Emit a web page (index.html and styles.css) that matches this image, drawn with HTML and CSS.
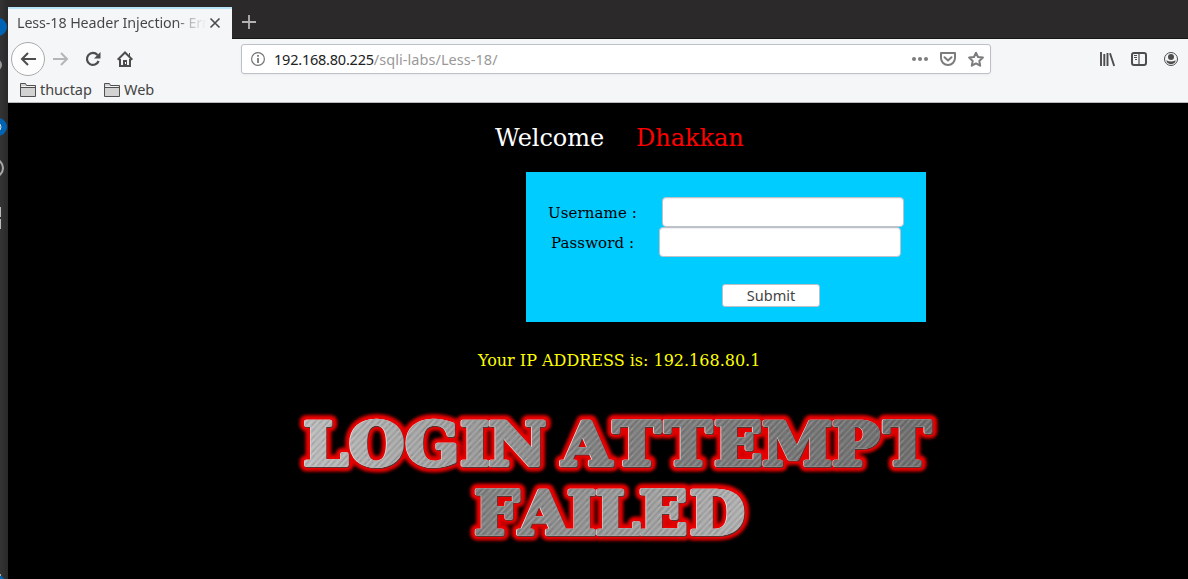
FILE: index.html
```html
<!DOCTYPE html>
<html lang="en">
<head>
<meta charset="utf-8">
<title>Less-18 Header Injection- Error Based</title>
<link rel="stylesheet" href="styles.css">
</head>
<body>
<div class="desktop">
  <aside class="dock">
    <svg width="8" height="579" viewBox="0 0 8 579">
      <circle cx="-2" cy="27" r="9" fill="#0064b4"/>
      <circle cx="-4" cy="65" r="5" fill="none" stroke="#999" stroke-width="2"/>
      <circle cx="-2" cy="127" r="9" fill="#0064b4"/>
      <path d="M0 124q2 3 0 6" fill="none" stroke="#ddd"/>
      <circle cx="-6" cy="168" r="9" fill="none" stroke="#aaa" stroke-width="2"/>
      <path d="M0 207h1v10H0zM0 219h1v10H0z" fill="#bbb"/>
      <circle cx="-3" cy="583" r="8" fill="#0064b4"/>
      <path d="M0 574h1v2H0z" fill="#aaa"/>
    </svg>
  </aside>
  <main class="browser">
    <header class="tabs">
      <div class="tab">
        <span class="tab-title">Less-18 Header Injection- Err</span>
        <svg class="tab-close" width="12" height="12" viewBox="0 0 12 12"><path d="M1.500 1.500l9 9M10.500 1.500l-9 9" stroke="#4a4a4a" stroke-width="1.600"/></svg>
      </div>
      <svg class="new-tab" width="14" height="14" viewBox="0 0 14 14"><path d="M7 0v14M0 7h14" stroke="#b4b3b3" stroke-width="1.800"/></svg>
    </header>
    <nav class="toolbar">
      <div class="nav-buttons">
        <span class="back"><svg width="16" height="16" viewBox="0 0 16 16"><path d="M16 8H2M8 2L2 8l6 6" fill="none" stroke="#4d4d4d" stroke-width="2"/></svg></span>
        <svg width="16" height="16" viewBox="0 0 16 16"><path d="M0 8h14M8 2l6 6-6 6" fill="none" stroke="#b5b6b7" stroke-width="2"/></svg>
        <svg width="16" height="16" viewBox="0 0 16 16"><path d="M13.600 10A6 6 0 1 1 12.500 4" fill="none" stroke="#4d4d4d" stroke-width="2.200"/><path d="M15.500 1v6.500H9z" fill="#4d4d4d"/></svg>
        <svg width="16" height="16" viewBox="0 0 16 16"><path d="M.7 8.700L8 1.500l7.300 7.200M3 8v7h10V8" fill="none" stroke="#4d4d4d" stroke-width="2"/><path d="M6 15V9h4v6z" fill="#4d4d4d"/><path d="M12 2h1v3h-1z" fill="#4d4d4d"/><path d="M8 11h1v2H8z" fill="#f5f6f7"/></svg>
      </div>
      <div class="urlbar">
        <svg width="14" height="14" viewBox="0 0 14 14"><circle cx="7" cy="7" r="6.400" fill="none" stroke="#777" stroke-width="1.200"/><path d="M6.100 6h1.800v5H6.100zM6.100 3h1.800v1.800H6.100z" fill="#777"/></svg>
        <div class="address"><span class="host">192.168.80.225</span><span class="path">/sqli-labs/Less-18/</span></div>
        <div class="page-actions">
          <svg width="16" height="16" viewBox="0 0 16 16"><g fill="#7c7c7c"><circle cx="2" cy="8" r="2"/><circle cx="8" cy="8" r="2"/><circle cx="14" cy="8" r="2"/></g></svg>
          <svg width="16" height="16" viewBox="0 0 16 16"><path d="M1 2h14v5a7 7 0 0 1-14 0z" fill="none" stroke="#7c7c7c" stroke-width="2" stroke-linejoin="round"/><path d="M4.500 6.200L8 9.500l3.500-3.300" fill="none" stroke="#7c7c7c" stroke-width="2" stroke-linecap="round"/></svg>
          <svg width="16" height="16" viewBox="0 0 16 16"><path d="M8 1.700l2 4.300 4.900.6-3.600 3.300.9 4.800L8 12.400l-4.200 2.300.9-4.800L1.100 6.600 6 6z" fill="none" stroke="#7c7c7c" stroke-width="2" stroke-linejoin="round"/></svg>
        </div>
      </div>
      <div class="tools">
        <svg width="16" height="16" viewBox="0 0 16 16"><path d="M2 1v14M5.300 3v12M8.500 2v13M11 2.300L15.200 15" fill="none" stroke="#4d4d4d" stroke-width="1.900"/></svg>
        <svg width="16" height="16" viewBox="0 0 16 16"><rect x="1" y="2" width="14" height="12" rx="2" fill="none" stroke="#4d4d4d" stroke-width="2"/><path d="M8 2v12" stroke="#4d4d4d" stroke-width="1.200"/><path d="M3 4.500h3M3 6.500h3M4 8.500h2" stroke="#4d4d4d"/></svg>
        <svg width="16" height="16" viewBox="0 0 16 16"><circle cx="8" cy="8" r="6.500" fill="none" stroke="#4d4d4d"/><circle cx="8" cy="6" r="3" fill="#4d4d4d"/><path d="M3.300 9.300Q8 11.800 12.700 9.300L12 11.500Q8 15 4 11.500z" fill="#4d4d4d"/></svg>
      </div>
    </nav>
    <div class="bookmarks">
      <svg width="16" height="14" viewBox="0 0 16 14"><path d="M.5 13.500V.5h5l1 2h9v11z" fill="#d2d2d2" stroke="#505050"/><path d="M1 4.500h14" stroke="#505050"/><path d="M1.500 3.500h13" stroke="#f3f3f3"/></svg>
      <span class="bm-first">thuctap</span>
      <svg width="16" height="14" viewBox="0 0 16 14"><path d="M.5 13.500V.5h5l1 2h9v11z" fill="#d2d2d2" stroke="#505050"/><path d="M1 4.500h14" stroke="#505050"/><path d="M1.500 3.500h13" stroke="#f3f3f3"/></svg>
      <span class="bm-second">Web</span>
    </div>
    <section class="page">
      <div class="welcome"><span>Welcome</span><span class="name">Dhakkan</span></div>
      <form class="login">
        <label class="field user"><span>Username :</span><input type="text"></label>
        <label class="field pass"><span>Password :</span><input type="password"></label>
        <button class="submit" type="button">Submit</button>
      </form>
      <p class="ip">Your IP ADDRESS is: 192.168.80.1</p>
      <svg class="banner" width="660" height="150" viewBox="290 405 660 150">
        <defs>
          <pattern id="brush" width="9" height="9" patternUnits="userSpaceOnUse" patternTransform="rotate(-48)">
            <path d="M0 .5h9M0 5.200h9" stroke="#fff" stroke-opacity=".13" stroke-width=".8"/>
            <path d="M0 2.600h9M0 7.500h9" stroke="#000" stroke-opacity=".12" stroke-width=".8"/>
          </pattern>
          <linearGradient id="metal" gradientUnits="userSpaceOnUse" x1="286" y1="419" x2="885" y2="419">
            <stop offset="0" stop-color="#bdbdbd"/><stop offset=".25" stop-color="#9f9f9f"/><stop offset=".38" stop-color="#8c8c8c"/><stop offset=".46" stop-color="#828282"/><stop offset="1" stop-color="#707070"/>
          </linearGradient>
          <linearGradient id="metal-low" gradientUnits="userSpaceOnUse" x1="448" y1="488" x2="703" y2="510">
            <stop offset="0" stop-color="#808080"/><stop offset="1" stop-color="#b2b2b2"/>
          </linearGradient>
          <filter id="glow" x="-10%" y="-30%" width="120%" height="160%"><feGaussianBlur stdDeviation="1.600"/></filter>
          <g id="line-one" transform="scale(1.06 1)"><text y="464.500" x="286.400 329.400 382.400 434.100 460.800">LOGIN</text><text y="464.500" x="530.500 578.500 627.100 673.800 719.200 785 833.800">ATTEMPT</text></g>
          <g id="line-two" transform="scale(1.06 1)"><text y="533.500" x="447.500 489.900 535 561.900 603 650.900">FAILED</text></g>
        </defs>
        <g class="halo" filter="url(#glow)"><use href="#line-one"/><use href="#line-two"/></g>
        <g class="rim"><use href="#line-one"/><use href="#line-two"/></g>
        <g class="shade"><use href="#line-one" x=".5" y=".5"/><use href="#line-two" x=".5" y=".5"/></g>
        <g class="shine"><use href="#line-one" x="-.7" y="-.7"/><use href="#line-two" x="-.7" y="-.7"/></g>
        <g class="face"><use class="upper" href="#line-one"/><use class="lower" href="#line-two"/></g>
        <g class="grain"><use href="#line-one"/><use href="#line-two"/></g>
      </svg>
    </section>
  </main>
</div>
</body>
</html>
```
FILE: styles.css
```css
* { box-sizing: border-box; }
body { margin: 0; background: #000; overflow: hidden; font-family: "Noto Sans", sans-serif; }
svg { display: block; flex: none; }
.desktop { display: flex; width: 1188px; height: 579px; }
.dock { width: 8px; background: linear-gradient(90deg, #343434, #292929); overflow: hidden; }
.browser { flex: 1; display: flex; flex-direction: column; }
.tabs { display: flex; align-items: center; height: 39px; padding-top: 7px; background: #2b292a; border-bottom: 1px solid #161616; }
.tab { display: flex; align-items: center; width: 224px; height: 32px; margin-bottom: -1px; align-self: flex-start; padding: 0 11px 0 9px; background: #f5f6f7; border-top: 2px solid #b9e6f7; }
.tab-title { width: 189px; margin-top: -3px; white-space: nowrap; font-size: 14.300px; letter-spacing: -.1px; color: transparent; background: linear-gradient(90deg, #444 160px, #aaa 170px, #f5f6f7 190px); background-clip: text; }
.tab-close { margin-left: 3px; margin-top: -2px; }
.new-tab { margin-left: 10px; margin-top: -1px; }
.toolbar { display: flex; align-items: center; height: 40px; padding: 0 9px 0 3px; background: #f5f6f7; }
.nav-buttons { display: flex; align-items: center; gap: 16px; width: 230px; }
.nav-buttons .back { display: grid; place-items: center; width: 34px; height: 34px; margin-right: -8px; border: 1px solid #aaa; border-radius: 50%; background: #fdfdfd; }
.urlbar { display: flex; align-items: center; width: 750px; height: 30px; padding: 0 6px 0 9px; border: 1px solid #bdc0c7; border-radius: 3px; background: #fff; box-shadow: 0 1px 3px #0000000d; }
.address { margin-left: 9px; font-size: 14.500px; white-space: nowrap; color: #999; letter-spacing: .05px; }
.host { color: #222; letter-spacing: -.22px; }
.page-actions { display: flex; gap: 12px; margin-left: auto; }
.tools { display: flex; gap: 16px; margin-left: auto; }
.bookmarks { display: flex; align-items: center; height: 24px; padding: 0 12px 2px; background: #f5f6f7; border-bottom: 1px solid #b9b9bc; font-size: 14.500px; color: #444; }
.bookmarks span { margin: -2px 0 0 4px; }
.bookmarks .bm-first { width: 64px; letter-spacing: -.1px; }
.bm-first, .bm-second { line-height: 20px; }
.page { flex: 1; display: flex; flex-direction: column; background: #000; font-family: "DejaVu Serif", serif; }
.welcome { display: flex; gap: 32px; padding: 21px 0 0 487px; font-size: 24px; line-height: 29px; letter-spacing: -.05px; color: #fff; }
.name { color: red; }
.login { width: 400px; height: 150px; margin: 19px 0 0 518px; padding-top: 25px; background: #0cf; }
.field { display: flex; align-items: center; height: 30px; font-size: 15px; color: #000; white-space: nowrap; }
.field span { width: 114px; padding-top: 2px; letter-spacing: .1px; }
.user { padding-left: 22px; }
.pass { padding-left: 25px; }
.pass span { width: 108px; }
.field input { width: 242px; height: 30px; border: 1px solid #bdc1c9; border-radius: 4px; background: #fff; box-shadow: inset 0 1px 1px #0001; }
.submit { display: block; width: 98px; height: 23px; margin: 27px 0 0 196px; padding: 0; border: 1px solid #bbc1c9; border-radius: 3px; background: #fff; font: 14.500px/19px "Noto Sans", sans-serif; color: #444; }
.ip { margin: 29px 0 0 470px; font-size: 16px; line-height: 20px; color: #ff0; }
.banner { margin: 35px 0 0 282px; }
.banner text { font-family: "DejaVu Serif", serif; font-weight: bold; font-size: 60px; }
.banner g { stroke-linejoin: round; }
.halo { fill: #e00000; stroke: #e00000; stroke-width: 13px; }
.rim { fill: #e90000; stroke: #e90000; stroke-width: 8px; }
.shade { fill: #5a3030; stroke: #5a3030; stroke-width: 4px; }
.shine { fill: #eee; stroke: #eee; stroke-width: 3.600px; }
.face { stroke-width: 3.600px; }
.upper { fill: url(#metal); stroke: url(#metal); }
.lower { fill: url(#metal-low); stroke: url(#metal-low); }
.grain { fill: url(#brush); stroke: url(#brush); stroke-width: 3.600px; }
```
